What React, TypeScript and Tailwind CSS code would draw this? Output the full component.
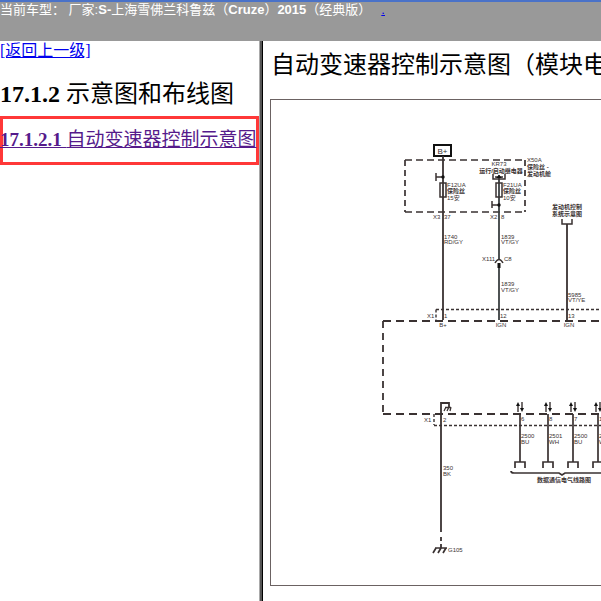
const INK = "#3a3232";

type Label = { x: number; y: number; text: string; bold?: boolean; middle?: boolean };

const labels: Label[] = [
    { x: 527, y: 162, text: "X50A" },
    { x: 527, y: 169, text: "保险丝 -", bold: true },
    { x: 527, y: 176, text: "发动机舱", bold: true },
    { x: 499, y: 166, text: "KR73", middle: true },
    { x: 501, y: 173, text: "运行/启动继电器", bold: true, middle: true },
    { x: 447, y: 187, text: "F12UA" },
    { x: 447, y: 193, text: "保险丝", bold: true },
    { x: 447, y: 200, text: "15安" },
    { x: 503, y: 187, text: "F21UA" },
    { x: 503, y: 193, text: "保险丝", bold: true },
    { x: 503, y: 200, text: "10安" },
    { x: 433, y: 219, text: "X3" },
    { x: 444, y: 219, text: "37" },
    { x: 490, y: 219, text: "X2" },
    { x: 501, y: 219, text: "8" },
    { x: 567, y: 209, text: "发动机控制", bold: true, middle: true },
    { x: 567, y: 216, text: "系统示意图", bold: true, middle: true },
    { x: 444, y: 239, text: "1740" },
    { x: 444, y: 244, text: "RD/GY" },
    { x: 501, y: 239, text: "1839" },
    { x: 501, y: 244, text: "VT/GY" },
    { x: 482, y: 261, text: "X111" },
    { x: 504, y: 261, text: "C8" },
    { x: 501, y: 286, text: "1839" },
    { x: 501, y: 292, text: "VT/GY" },
    { x: 568, y: 297, text: "5985" },
    { x: 568, y: 302, text: "VT/YE" },
    { x: 427, y: 318, text: "X1" },
    { x: 444, y: 318, text: "1" },
    { x: 500, y: 318, text: "12" },
    { x: 568, y: 318, text: "13" },
    { x: 443, y: 327, text: "B+", middle: true },
    { x: 501, y: 327, text: "IGN", middle: true },
    { x: 569, y: 327, text: "IGN", middle: true },
    { x: 424, y: 422, text: "X1" },
    { x: 443, y: 422, text: "2" },
    { x: 443, y: 470, text: "350" },
    { x: 443, y: 476, text: "BK" },
    { x: 448, y: 552, text: "G105" },
    { x: 564, y: 482, text: "数据通信电气线路图", bold: true, middle: true },
];

const dataLines = [
    { x: 520, pin: "6", wire: "2500", color: "BU" },
    { x: 548, pin: "8", wire: "2501", color: "WH" },
    { x: 573, pin: "7", wire: "2500", color: "BU" },
    { x: 598, pin: "16", wire: "2501", color: "WH" },
];

function Fuse({ x }: { x: number }) {
    return <rect x={x - 3} y={183} width={6} height={14} strokeWidth={1.5} />;
}

function WiringDiagram() {
    return (
        <svg
            width="700"
            height="485"
            viewBox="271 100 700 485"
            fill="none"
            stroke={INK}
            role="img"
            aria-label="自动变速器控制示意图"
            className="block max-w-none font-['Liberation_Sans','Noto_Sans_CJK_SC',sans-serif] text-[6px]"
        >
            {/* B+ supply and underhood fuse block */}
            <rect x="434" y="145" width="17" height="11" stroke="#111" strokeWidth="2" />
            <text x="442.5" y="153.5" textAnchor="middle" fill={INK} stroke="none" className="text-[8px]">
                B+
            </text>
            <path d="M405 160H525M405 212H525" strokeWidth="1.7" strokeDasharray="7 4" />
            <path d="M405 160V212M525 160V212" strokeWidth="1.7" strokeDasharray="6 4" />

            <g strokeWidth="1.8">
                <path d="M443 156V320M567 224V320" />
                <path d="M499 175V259M499 268V320" stroke="#3b4042" />
            </g>
            <Fuse x={443} />
            <Fuse x={499} />

            <g strokeWidth="1.5">
                <path d="M436 177H443M436 173V181M492 205H499M492 201V208" />
                <path d="M493 174V179H505V174M562 219V224H572V219" />
                <path d="M495 177H503M495 263Q499 256 503 263" />
            </g>
            <g fill="#111" stroke="none">
                <circle cx="443" cy="177" r="1.7" />
                <circle cx="499" cy="205" r="1.7" />
                <path d="M496 178L499 175L502 178Z" />
                <rect x="497.5" y="263" width="3" height="5" />
            </g>

            {/* transmission control module */}
            <path d="M383 321H700M383 414H700" strokeWidth="1.8" strokeDasharray="8 5" />
            <path d="M383 321V414" strokeWidth="1.8" strokeDasharray="7 5" />
            <path d="M436 309.5H700M436 309.5V320M434 425.5H700M434 414V425" strokeWidth="1.4" strokeDasharray="3 2" />

            {/* ground */}
            <path d="M449 407V403H441V532M441 537V541M441 544V548" strokeWidth="1.8" />
            <path d="M445 407.5H451M446 407L444 411M449 407L447 411M451 407L450 411" strokeWidth="1.3" />
            <path d="M435 548H447M436 548L433 553M441 548L438 553M446 548L443 553" strokeWidth="1.7" />

            {dataLines.map(({ x, pin, wire, color }) => (
                <g key={x}>
                    <path d={`M${x} 414V462M${x - 5} 468V462H${x + 5}V468`} strokeWidth="1.7" />
                    <path d={`M${x - 2} 412V404M${x + 2} 402V410`} strokeWidth="1.4" />
                    <path
                        d={`M${x - 4} 406L${x - 2} 402L${x} 406ZM${x} 408L${x + 2} 412L${x + 4} 408Z`}
                        fill="#111"
                        stroke="none"
                    />
                    <g fill={INK} stroke="none">
                        <text x={x + 1} y="421">{pin}</text>
                        <text x={x + 1} y="438">{wire}</text>
                        <text x={x + 1} y="444">{color}</text>
                    </g>
                </g>
            ))}
            <path d="M511 471Q511 473 514 473H559L562 475L565 473H614" strokeWidth="1.7" />

            <g fill={INK} stroke="none">
                {labels.map((l) => (
                    <text
                        key={`${l.x}-${l.y}`}
                        x={l.x}
                        y={l.y}
                        textAnchor={l.middle ? "middle" : "start"}
                        className={l.bold ? "font-bold" : undefined}
                    >
                        {l.text}
                    </text>
                ))}
            </g>
        </svg>
    );
}

export default function App() {
    return (
        <div className="flex min-h-screen flex-col bg-white font-['Liberation_Serif','Noto_Sans_CJK_SC',serif] text-black">
            <header className="h-[41px] border-t-2 border-[#4a72c8] bg-[#999999] font-['Liberation_Sans','Noto_Sans_CJK_SC',sans-serif] text-[13px] leading-4 whitespace-nowrap text-white">
                当前车型： 厂家:<b>S-</b>上海雪佛兰科鲁兹（<b>Cruze</b>）<b>2015</b>（经典版）
                <a href="#" className="ml-2.5 text-[#0000ee] underline">.</a>
            </header>

            <div className="flex flex-1">
                <nav className="w-[259px] shrink-0 whitespace-nowrap">
                    <a href="#" className="block text-base leading-5 text-[#0000ee] underline">[返回上一级]</a>
                    <h2 className="mt-[15px] text-2xl leading-9 font-bold">
                        17.1.2 <span className="font-normal">示意图和布线图</span>
                    </h2>
                    <h3 className="mt-1 h-[49px] pt-[10px] text-[19px] leading-7 font-bold ring-3 ring-[#ff3838] ring-inset">
                        <a href="#" className="text-[#551a8b] underline">
                            17.1.2.1 <span className="font-normal">自动变速器控制示意图</span>
                        </a>
                    </h3>
                </nav>

                {/* frame divider */}
                <div className="w-1 shrink-0 border-r border-l border-r-black border-l-[#aaaaaa] bg-[#555555]" />

                <main className="min-w-0 flex-1 overflow-hidden pl-[7px] whitespace-nowrap">
                    <h1 className="mt-2 pl-px text-2xl leading-8">自动变速器控制示意图（模块电源、搭铁、串行数据）</h1>
                    <div className="mt-[18px] w-max border border-[#6b6262]">
                        <WiringDiagram />
                    </div>
                </main>
            </div>
        </div>
    );
}
